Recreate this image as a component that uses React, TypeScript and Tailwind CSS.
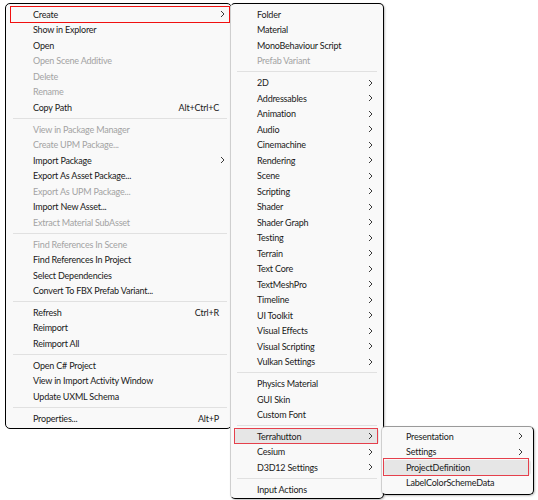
type Item =
  | { kind: "sep" }
  | { kind: "item"; label: string; disabled?: boolean; sub?: boolean; shortcut?: string; active?: boolean };

const it = (label: string, opts: Partial<Omit<Extract<Item, { kind: "item" }>, "kind" | "label">> = {}): Item => ({
  kind: "item",
  label,
  ...opts,
});
const sep: Item = { kind: "sep" };

const mainItems: Item[] = [
  it("Create", { sub: true }),
  it("Show in Explorer"),
  it("Open"),
  it("Open Scene Additive", { disabled: true }),
  it("Delete", { disabled: true }),
  it("Rename", { disabled: true }),
  it("Copy Path", { shortcut: "Alt+Ctrl+C" }),
  sep,
  it("View in Package Manager", { disabled: true }),
  it("Create UPM Package...", { disabled: true }),
  it("Import Package", { sub: true }),
  it("Export As Asset Package..."),
  it("Export As UPM Package...", { disabled: true }),
  it("Import New Asset..."),
  it("Extract Material SubAsset", { disabled: true }),
  sep,
  it("Find References In Scene", { disabled: true }),
  it("Find References In Project"),
  it("Select Dependencies"),
  it("Convert To FBX Prefab Variant..."),
  sep,
  it("Refresh", { shortcut: "Ctrl+R" }),
  it("Reimport"),
  it("Reimport All"),
  sep,
  it("Open C# Project"),
  it("View in Import Activity Window"),
  it("Update UXML Schema"),
  sep,
  it("Properties...", { shortcut: "Alt+P" }),
];

const createItems: Item[] = [
  it("Folder"),
  it("Material"),
  it("MonoBehaviour Script"),
  it("Prefab Variant", { disabled: true }),
  sep,
  ...[
    "2D",
    "Addressables",
    "Animation",
    "Audio",
    "Cinemachine",
    "Rendering",
    "Scene",
    "Scripting",
    "Shader",
    "Shader Graph",
    "Testing",
    "Terrain",
    "Text Core",
    "TextMeshPro",
    "Timeline",
    "UI Toolkit",
    "Visual Effects",
    "Visual Scripting",
    "Vulkan Settings",
  ].map((l) => it(l, { sub: true })),
  sep,
  it("Physics Material"),
  it("GUI Skin"),
  it("Custom Font"),
  sep,
  it("Terrahutton", { sub: true, active: true }),
  it("Cesium", { sub: true }),
  it("D3D12 Settings", { sub: true }),
  sep,
  it("Input Actions"),
];

const terraItems: Item[] = [
  it("Presentation", { sub: true }),
  it("Settings", { sub: true }),
  it("ProjectDefinition", { active: true }),
  it("LabelColorSchemeData"),
];

function Chevron() {
  return (
    <svg width="5" height="8" viewBox="0 0 5 8" className="shrink-0">
      <polyline points="1,1 4,4 1,7" fill="none" stroke="#3a3a3a" strokeWidth="1" />
    </svg>
  );
}

function MenuList({ items, textPad, rightPad, sepInset }: { items: Item[]; textPad: string; rightPad: string; sepInset: string }) {
  return (
    <>
      {items.map((item, i) =>
        item.kind === "sep" ? (
          <div key={i} className={`h-[6.4px] flex items-center ${sepInset}`}>
            <div className="h-px w-full bg-[#e1e1e1]" />
          </div>
        ) : (
          <div
            key={i}
            className={`h-[15.5px] flex items-center rounded-[3px] ${textPad} ${rightPad} ${
              item.active ? "bg-[#e6e6e6]" : ""
            }`}
          >
            <span className={`flex-1 whitespace-nowrap ${item.disabled ? "text-[#a3a3a3]" : "text-[#1a1a1a]"}`}>
              {item.label}
            </span>
            {item.shortcut && <span className="text-[#1a1a1a] whitespace-nowrap pr-[6px]">{item.shortcut}</span>}
            {item.sub && <Chevron />}
          </div>
        )
      )}
    </>
  );
}

export default function App() {
  return (
    <div
      className="relative w-[538px] h-[500px] bg-white overflow-hidden text-[9px] leading-none tracking-[-0.2px]"
      style={{ fontFamily: "Lato, 'Liberation Sans', sans-serif" }}
    >
      {/* main context menu */}
      <div className="absolute left-[5px] top-[3px] w-[227px] h-[426px] bg-[#f9f9f9] border border-black rounded-[5px] pt-[2.5px] px-[4px]">
        <MenuList items={mainItems} textPad="pl-[23px]" rightPad="pr-[2px]" sepInset="pl-[3px] pr-[0px]" />
      </div>

      {/* Create submenu */}
      <div className="absolute left-[230px] top-[3px] w-[154px] h-[496px] bg-[#f9f9f9] border border-black border-l-[#cfcfcf] rounded-[5px] pt-[2.5px] px-[4px] shadow-[1px_1px_2px_rgba(0,0,0,0.25)]">
        <MenuList items={createItems} textPad="pl-[22px]" rightPad="pr-[6px]" sepInset="px-[2px]" />
      </div>

      {/* Terrahutton submenu */}
      <div className="absolute left-[381px] top-[426px] w-[153px] h-[69px] bg-[#f9f9f9] border border-black border-l-[#cfcfcf] border-t-[#9a9a9a] rounded-[5px] pt-[1.5px] px-[2px] shadow-[1px_1px_2px_rgba(0,0,0,0.25)]">
        <MenuList items={terraItems} textPad="pl-[22px]" rightPad="pr-[8px]" sepInset="px-[2px]" />
      </div>

      {/* red annotation boxes */}
      <div className="absolute left-[10px] top-[6px] w-[220px] h-[17px] border border-[#f01010]" />
      <div className="absolute left-[234px] top-[428px] w-[144px] h-[16px] border border-[#e5404c]" />
      <div className="absolute left-[383px] top-[458px] w-[146px] h-[18px] border border-[#e5404c]" />
    </div>
  );
}
